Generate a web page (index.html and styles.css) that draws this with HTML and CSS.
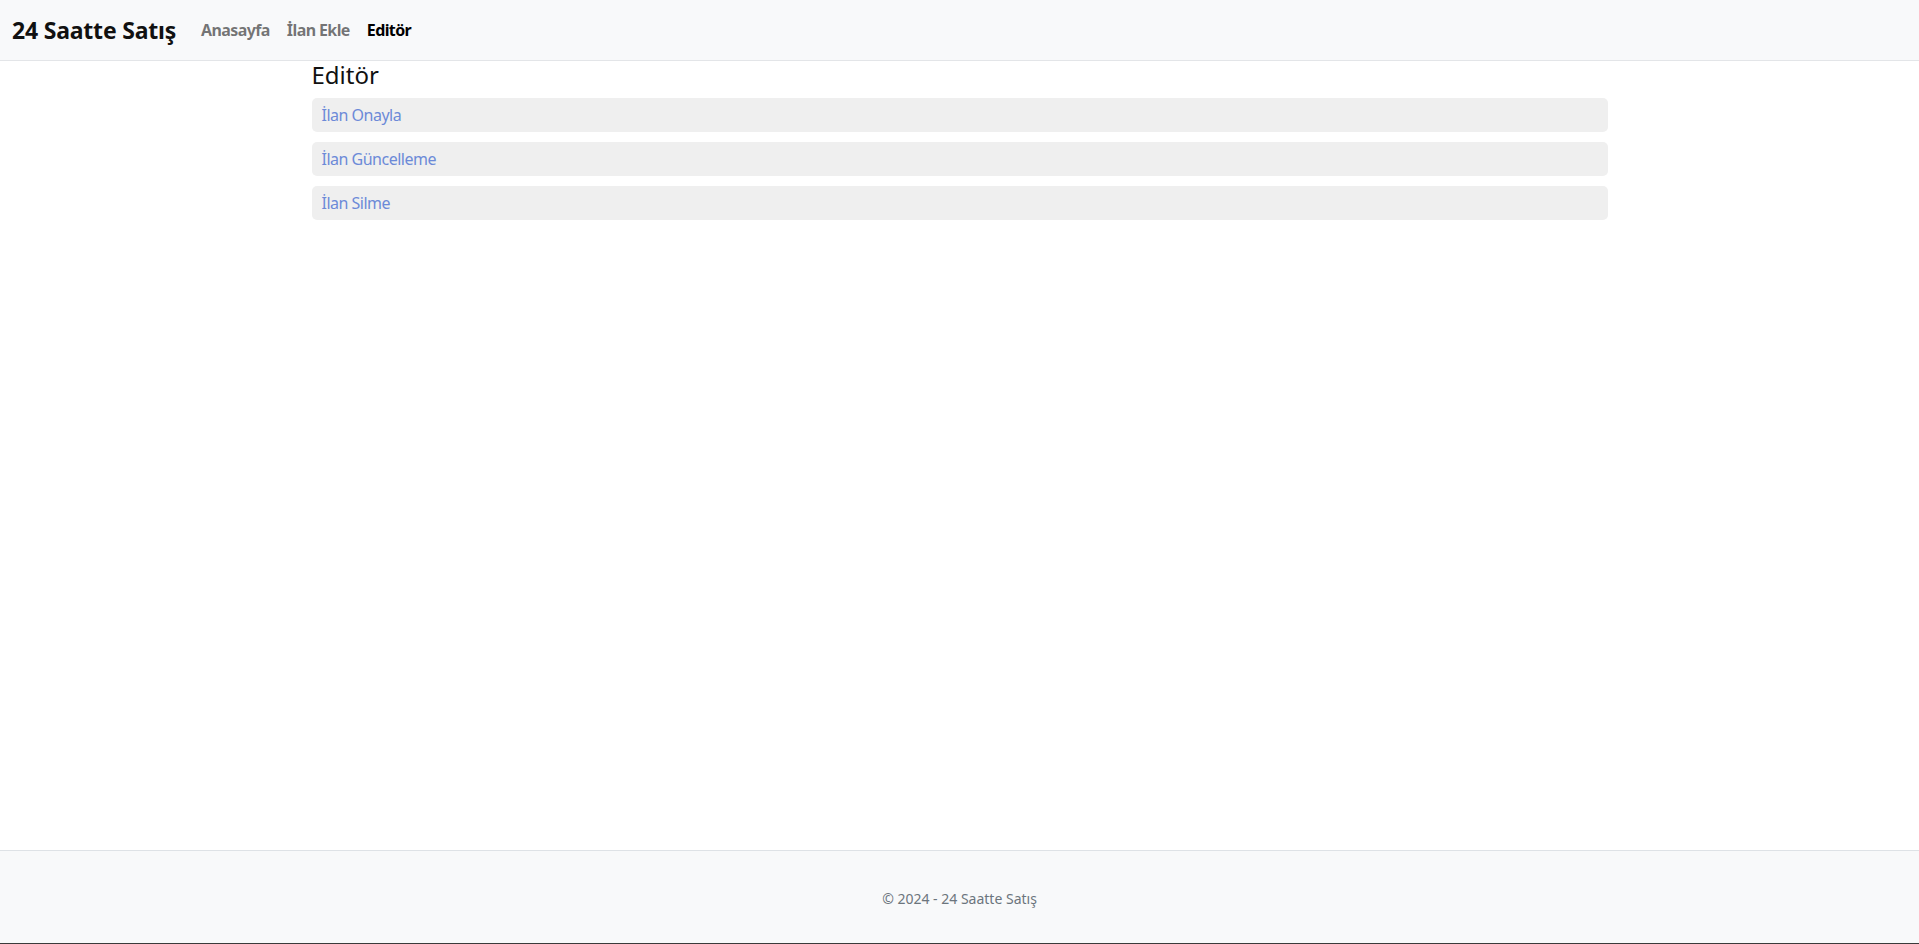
FILE: index.html
```html
<!DOCTYPE html>
<html lang="tr">
<head>
<meta charset="utf-8">
<title>Editör - 24 Saatte Satış</title>
<link rel="stylesheet" href="styles.css">
</head>
<body>
<div class="page">
  <header class="navbar">
    <a class="brand" href="#">24 Saatte Satış</a>
    <nav class="nav">
      <a class="nav-link" href="#">Anasayfa</a>
      <a class="nav-link" href="#">İlan Ekle</a>
      <a class="nav-link active" href="#">Editör</a>
    </nav>
  </header>
  <main class="container">
    <h4 class="title">Editör</h4>
    <ul class="menu">
      <li class="menu-item"><a href="#">İlan Onayla</a></li>
      <li class="menu-item"><a href="#">İlan Güncelleme</a></li>
      <li class="menu-item"><a href="#">İlan Silme</a></li>
    </ul>
  </main>
  <footer class="footer">© 2024 - 24 Saatte Satış</footer>
</div>
</body>
</html>
```

FILE: styles.css
```css
* { box-sizing: border-box; }
html, body { margin: 0; padding: 0; }
body {
  font-family: "Noto Sans", "Open Sans", sans-serif;
  color: #212529;
  background: #fff;
}
.page {
  min-height: 100vh;
  display: flex;
  flex-direction: column;
}
.navbar {
  height: 61px;
  background: #f8f9fa;
  border-bottom: 1px solid #e3e5e8;
  display: flex;
  align-items: center;
  padding: 0 12px;
}
.brand {
  font-size: 23px;
  font-weight: 700;
  color: #111;
  text-decoration: none;
  margin-right: 25px;
  letter-spacing: -0.2px;
}
.nav { display: flex; gap: 17px; }
.nav-link {
  font-size: 16px;
  font-weight: 700;
  color: rgba(0,0,0,0.55);
  text-decoration: none;
  letter-spacing: -0.6px;
}
.nav-link.active { color: #000; }
.container {
  width: 1320px;
  margin: 0 auto;
  padding: 0 12px;
  flex: 1;
}
.title {
  font-size: 24px;
  font-weight: 400;
  line-height: 1.2;
  margin: 0 0 8px;
  color: #111;
}
.menu {
  list-style: none;
  margin: 0;
  padding: 0;
}
.menu-item {
  background: #efefef;
  border-radius: 5px;
  height: 34px;
  display: flex;
  align-items: center;
  padding: 0 10px;
  margin-bottom: 10px;
}
.menu-item a {
  font-size: 16px;
  color: #6c8ad8;
  text-decoration: none;
  letter-spacing: -0.5px;
}
.footer {
  height: 94px;
  background: #f8f9fa;
  border-top: 1px solid #dee2e6;
  border-bottom: 1px solid #3a3a3a;
  display: flex;
  align-items: center;
  justify-content: center;
  padding-top: 2px;
  font-size: 14px;
  color: #6c757d;
}
```
